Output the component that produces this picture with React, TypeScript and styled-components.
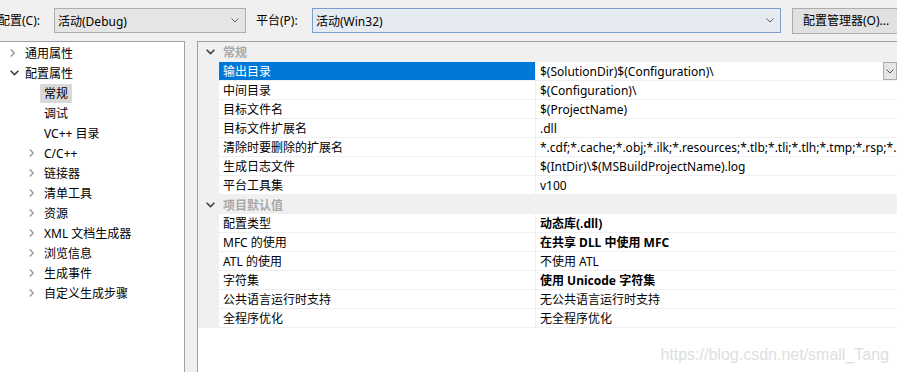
import React from 'react';
import styled, { createGlobalStyle } from 'styled-components';

const GlobalStyle = createGlobalStyle`
  html, body {
    margin: 0;
    padding: 0;
    background: #f0f0f0;
  }
  body {
    font-family: "Noto Sans", "Noto Sans CJK SC", sans-serif;
    font-size: 12px;
    color: #000;
  }
`;

interface TreeNode {
  label: string;
  level: number;
  state: 'open' | 'closed' | 'leaf';
  selected?: boolean;
}

const tree: TreeNode[] = [
  { label: '通用属性', level: 0, state: 'closed' },
  { label: '配置属性', level: 0, state: 'open' },
  { label: '常规', level: 1, state: 'leaf', selected: true },
  { label: '调试', level: 1, state: 'leaf' },
  { label: 'VC++ 目录', level: 1, state: 'leaf' },
  { label: 'C/C++', level: 1, state: 'closed' },
  { label: '链接器', level: 1, state: 'closed' },
  { label: '清单工具', level: 1, state: 'closed' },
  { label: '资源', level: 1, state: 'closed' },
  { label: 'XML 文档生成器', level: 1, state: 'closed' },
  { label: '浏览信息', level: 1, state: 'closed' },
  { label: '生成事件', level: 1, state: 'closed' },
  { label: '自定义生成步骤', level: 1, state: 'closed' },
];

interface Prop {
  name: string;
  value: string;
  bold?: boolean;
  selected?: boolean;
}

const sections: { title: string; props: Prop[] }[] = [
  {
    title: '常规',
    props: [
      { name: '输出目录', value: '$(SolutionDir)$(Configuration)\\', selected: true },
      { name: '中间目录', value: '$(Configuration)\\' },
      { name: '目标文件名', value: '$(ProjectName)' },
      { name: '目标文件扩展名', value: '.dll' },
      {
        name: '清除时要删除的扩展名',
        value: '*.cdf;*.cache;*.obj;*.ilk;*.resources;*.tlb;*.tli;*.tlh;*.tmp;*.rsp;*.pgc;*.pgd;*.meta',
      },
      { name: '生成日志文件', value: '$(IntDir)\\$(MSBuildProjectName).log' },
      { name: '平台工具集', value: 'v100' },
    ],
  },
  {
    title: '项目默认值',
    props: [
      { name: '配置类型', value: '动态库(.dll)', bold: true },
      { name: 'MFC 的使用', value: '在共享 DLL 中使用 MFC', bold: true },
      { name: 'ATL 的使用', value: '不使用 ATL' },
      { name: '字符集', value: '使用 Unicode 字符集', bold: true },
      { name: '公共语言运行时支持', value: '无公共语言运行时支持' },
      { name: '全程序优化', value: '无全程序优化' },
    ],
  },
];

const ChevronDown = ({ color = '#606060', size = 8 }: { color?: string; size?: number }) => (
  <svg width={size} height={size / 2 + 1} viewBox="0 0 8 5">
    <path d="M0.5 0.5 L4 4 L7.5 0.5" fill="none" stroke={color} strokeWidth="1" />
  </svg>
);

const ChevronRight = () => (
  <svg width="5" height="8" viewBox="0 0 5 8">
    <path d="M0.8 0.5 L4.2 4 L0.8 7.5" fill="none" stroke="#a0a0a0" strokeWidth="1.6" />
  </svg>
);

const ChevronOpen = () => (
  <svg width="9" height="6" viewBox="0 0 9 6">
    <path d="M0.6 0.8 L4.5 4.6 L8.4 0.8" fill="none" stroke="#404040" strokeWidth="1.6" />
  </svg>
);

const App: React.FC = () => {
  return (
    <Window>
      <GlobalStyle />
      <TopBar>
        <Label $offset={-2}>配置(C):</Label>
        <Combo $width={192}>
          <span>活动(Debug)</span>
          <ChevronDown />
        </Combo>
        <Label $offset={10}>平台(P):</Label>
        <Combo $width={469} $focused>
          <span>活动(Win32)</span>
          <ChevronDown />
        </Combo>
        <ManagerButton>配置管理器(O)...</ManagerButton>
      </TopBar>
      <Body>
        <TreePanel>
          {tree.map(node => (
            <TreeRow key={node.label} $level={node.level}>
              <Toggle>
                {node.state === 'closed' && <ChevronRight />}
                {node.state === 'open' && <ChevronOpen />}
              </Toggle>
              <TreeLabel $selected={node.selected}>{node.label}</TreeLabel>
            </TreeRow>
          ))}
        </TreePanel>
        <GridPanel>
          {sections.map((section, si) => (
            <React.Fragment key={section.title}>
              <SectionRow $first={si === 0}>
                <Margin>
                  <ChevronOpen />
                </Margin>
                <SectionTitle>{section.title}</SectionTitle>
              </SectionRow>
              {section.props.map(p => (
                <PropRow key={p.name}>
                  <Margin />
                  <NameCell $selected={p.selected}>{p.name}</NameCell>
                  <ValueCell $bold={p.bold}>
                    <ValueText>{p.value}</ValueText>
                    {p.selected && (
                      <DropButton>
                        <ChevronDown color="#555" />
                      </DropButton>
                    )}
                  </ValueCell>
                </PropRow>
              ))}
            </React.Fragment>
          ))}
          <Watermark>https://blog.csdn.net/small_Tang</Watermark>
        </GridPanel>
      </Body>
    </Window>
  );
};

const Window = styled.div`
  width: 897px;
  height: 372px;
  display: flex;
  flex-direction: column;
  overflow: hidden;
  background: #f0f0f0;
`;

const TopBar = styled.div`
  height: 41px;
  flex-shrink: 0;
  display: flex;
  align-items: flex-start;
  padding-top: 8px;
  box-sizing: border-box;
  white-space: nowrap;
  overflow: hidden;
`;

const Label = styled.div<{ $offset: number }>`
  flex-shrink: 0;
  margin-left: ${p => p.$offset}px;
  height: 25px;
  line-height: 25px;
  width: 56px;
  color: #000;
`;

const Combo = styled.div<{ $width: number; $focused?: boolean }>`
  flex-shrink: 0;
  width: ${p => p.$width}px;
  height: 25px;
  box-sizing: border-box;
  border: 1px solid ${p => (p.$focused ? '#7a9fcf' : '#adadad')};
  background: ${p => (p.$focused ? '#e6ebf1' : '#e5e5e5')};
  display: flex;
  align-items: center;
  justify-content: space-between;
  padding: 0 6px 0 3px;
`;

const ManagerButton = styled.div`
  margin-left: 11px;
  height: 26px;
  width: 120px;
  flex-shrink: 0;
  box-sizing: border-box;
  border: 1px solid #adadad;
  background: #e1e1e1;
  line-height: 24px;
  padding-left: 10px;
`;

const Body = styled.div`
  flex: 1;
  display: flex;
  gap: 12px;
  min-height: 0;
`;

const TreePanel = styled.div`
  width: 185px;
  flex-shrink: 0;
  box-sizing: border-box;
  background: #fff;
  border-top: 1px solid #a0a0a0;
  border-right: 1px solid #a0a0a0;
  padding-top: 1px;
`;

const TreeRow = styled.div<{ $level: number }>`
  height: 20px;
  display: flex;
  align-items: center;
  padding-left: ${p => 8 + p.$level * 19}px;
  white-space: nowrap;
`;

const Toggle = styled.div`
  width: 11px;
  height: 20px;
  display: flex;
  align-items: center;
  justify-content: flex-start;
  padding-left: 2px;
  box-sizing: border-box;
`;

const TreeLabel = styled.div<{ $selected?: boolean }>`
  margin-left: 2px;
  padding: 0 4px;
  height: 19px;
  line-height: 19px;
  background: ${p => (p.$selected ? '#d9d9d9' : 'transparent')};
`;

const GridPanel = styled.div`
  position: relative;
  flex: 1;
  min-width: 0;
  box-sizing: border-box;
  background: #fff;
  border-top: 1px solid #a0a0a0;
  border-left: 1px solid #a0a0a0;
`;

const SectionRow = styled.div<{ $first?: boolean }>`
  height: ${p => (p.$first ? 20 : 19)}px;
  display: flex;
  align-items: center;
  background: #f0f0f0;
`;

const Margin = styled.div`
  width: 21px;
  align-self: stretch;
  flex-shrink: 0;
  background: #f0f0f0;
  display: flex;
  align-items: center;
  justify-content: center;
  padding-left: 3px;
  box-sizing: border-box;
`;

const SectionTitle = styled.div`
  padding-left: 4px;
  font-weight: bold;
  color: #a8a8a8;
`;

const PropRow = styled.div`
  height: 19px;
  display: flex;
  white-space: nowrap;
`;

const NameCell = styled.div<{ $selected?: boolean }>`
  width: 317px;
  flex-shrink: 0;
  box-sizing: border-box;
  padding: 1px 0 0 4px;
  line-height: 17px;
  border-bottom: 1px solid #f0f0f0;
  border-right: 1px solid #f0f0f0;
  background: ${p => (p.$selected ? '#0078d7' : '#fff')};
  color: ${p => (p.$selected ? '#fff' : '#000')};
`;

const ValueCell = styled.div<{ $bold?: boolean }>`
  flex: 1;
  min-width: 0;
  display: flex;
  box-sizing: border-box;
  padding-left: 4px;
  border-bottom: 1px solid #f0f0f0;
  font-weight: ${p => (p.$bold ? 'bold' : 'normal')};
`;

const ValueText = styled.div`
  flex: 1;
  overflow: hidden;
  padding-top: 1px;
  line-height: 17px;
`;

const DropButton = styled.div`
  width: 14px;
  height: 18px;
  box-sizing: border-box;
  border: 1px solid #adadad;
  background: #e5e5e5;
  display: flex;
  align-items: center;
  justify-content: center;
`;

const Watermark = styled.div`
  position: absolute;
  right: 8px;
  bottom: 8px;
  font-family: "Liberation Sans", Arial, sans-serif;
  font-size: 16px;
  color: #dedede;
  pointer-events: none;
`;

export default App;
